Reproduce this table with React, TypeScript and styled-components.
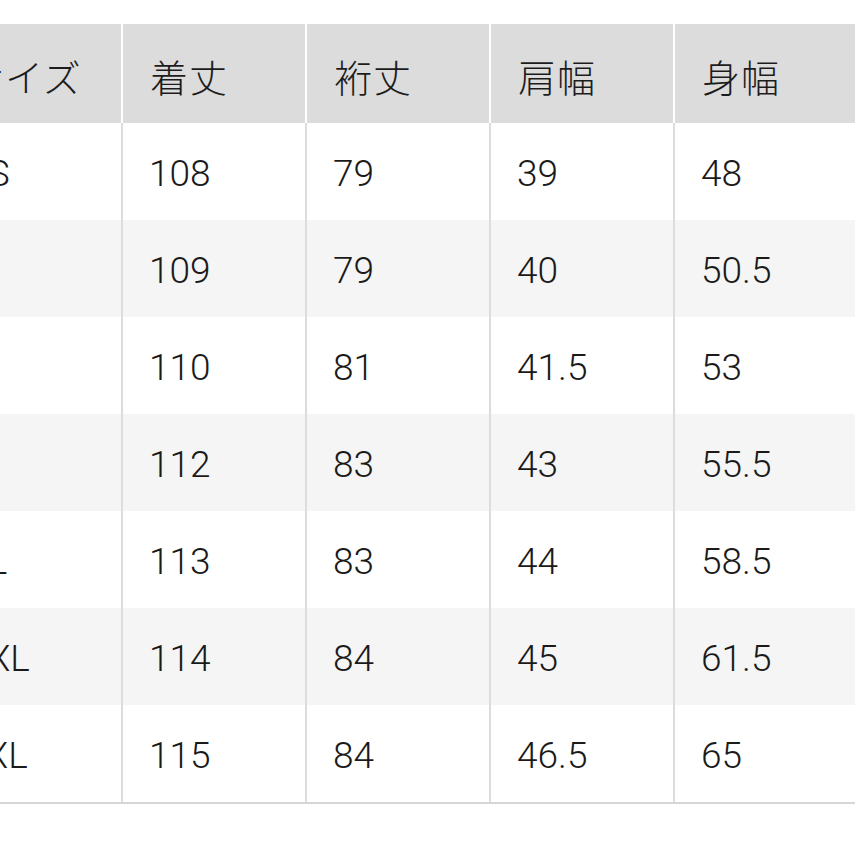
import styled, { createGlobalStyle } from "styled-components";

const GlobalStyle = createGlobalStyle`
  html, body {
    margin: 0;
    padding: 0;
    background: #ffffff;
  }
  body {
    width: 855px;
    height: 855px;
    overflow: hidden;
  }
`;

const StyledPage = styled.div`
  padding-top: 24px;
  width: 855px;
  overflow: hidden;
`;

const StyledTable = styled.div`
  display: grid;
  grid-template-columns: repeat(5, 184px);
  margin-left: -61px;
  width: 920px;
  border-bottom: 2px solid #d6d6d6;
`;

const StyledHeadCell = styled.div`
  display: flex;
  align-items: center;
  height: 99px;
  box-sizing: border-box;
  padding: 3px 0 0 27px;
  background: #dcdcdc;
  border-right: 2px solid #ffffff;
  color: #1c1c1c;
  font-family: "Noto Sans CJK JP", "Noto Sans", sans-serif;
  font-size: 38px;
  font-weight: 300;
  letter-spacing: 1px;
`;

const StyledCell = styled.div<{ $shaded: boolean }>`
  display: flex;
  align-items: center;
  height: 97px;
  box-sizing: border-box;
  padding: 4px 0 0 26px;
  background: ${({ $shaded }) => ($shaded ? "#f5f5f5" : "#ffffff")};
  border-right: 2px solid #dcdcdc;
  color: #1a1a1a;
  font-family: Roboto, "Liberation Sans", sans-serif;
  font-size: 37px;
  font-weight: 300;
`;

const headers = ["サイズ", "着丈", "裄丈", "肩幅", "身幅"];

const rows = [
  ["XS", "108", "79", "39", "48"],
  ["S", "109", "79", "40", "50.5"],
  ["M", "110", "81", "41.5", "53"],
  ["L", "112", "83", "43", "55.5"],
  ["XL", "113", "83", "44", "58.5"],
  ["XXL", "114", "84", "45", "61.5"],
  ["3XL", "115", "84", "46.5", "65"],
];

export default function App() {
  return (
    <>
      <GlobalStyle />
      <StyledPage>
        <StyledTable>
          {headers.map((h) => (
            <StyledHeadCell key={h}>{h}</StyledHeadCell>
          ))}
          {rows.map((row, i) =>
            row.map((value, j) => (
              <StyledCell key={`${i}-${j}`} $shaded={i % 2 === 1}>
                {value}
              </StyledCell>
            ))
          )}
        </StyledTable>
      </StyledPage>
    </>
  );
}
